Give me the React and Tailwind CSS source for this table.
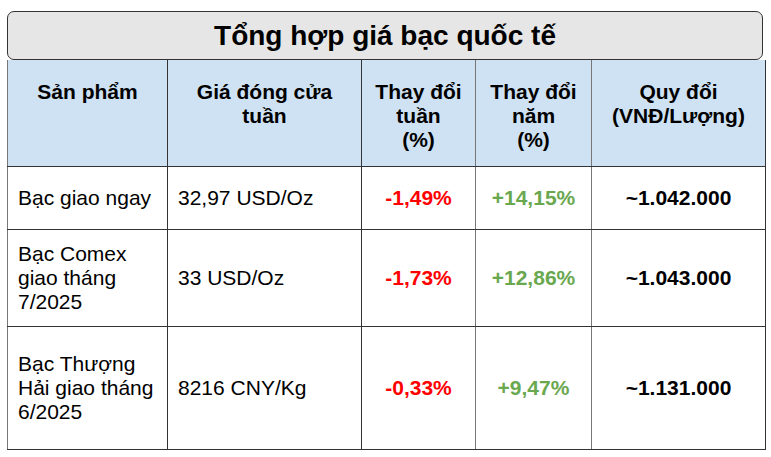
const rows = [
  {
    name: 'Bạc giao ngay',
    price: '32,97 USD/Oz',
    week: '-1,49%',
    year: '+14,15%',
    vnd: '~1.042.000',
    h: 'h-[63px]',
  },
  {
    name: 'Bạc Comex giao tháng 7/2025',
    price: '33 USD/Oz',
    week: '-1,73%',
    year: '+12,86%',
    vnd: '~1.043.000',
    h: 'h-[97px]',
  },
  {
    name: 'Bạc Thượng Hải giao tháng 6/2025',
    price: '8216 CNY/Kg',
    week: '-0,33%',
    year: '+9,47%',
    vnd: '~1.131.000',
    h: 'h-[123px]',
  },
];

const App = () => {
  return (
    <div className="w-[771px] h-[457px] bg-white pt-[11px] pl-[7px] font-['Liberation_Sans',Arial,sans-serif] text-black">
      <div className="w-[756px] h-[49px] rounded-[7px] border border-[#333] bg-[#e7e6e6] flex items-center justify-center">
        <h1 className="text-[28px] font-bold leading-none">Tổng hợp giá bạc quốc tế</h1>
      </div>

      <table className="w-[758px] border-collapse table-fixed text-[21px] leading-[24px]">
        <colgroup>
          <col className="w-[160px]" />
          <col className="w-[194px]" />
          <col className="w-[114px]" />
          <col className="w-[116px]" />
          <col className="w-[174px]" />
        </colgroup>
        <thead>
          <tr className="h-[106px] bg-[#cfe2f3] font-bold">
            <th className="border border-[#333] border-l-[#777] border-t-0 align-top text-center pt-[20px] px-2">Sản phẩm</th>
            <th className="border border-[#333] border-t-0 align-top text-center pt-[20px] px-2">
              Giá đóng cửa
              <br />
              tuần
            </th>
            <th className="border border-[#333] border-r-[#777] border-t-0 align-top text-center pt-[20px] px-1">
              Thay đổi
              <br />
              tuần
              <br />
              (%)
            </th>
            <th className="border border-[#777] border-b-[#333] border-t-0 align-top text-center pt-[20px] px-1">
              Thay đổi
              <br />
              năm
              <br />
              (%)
            </th>
            <th className="border border-[#333] border-l-[#777] border-t-0 align-top text-center pt-[20px] px-1">
              Quy đổi
              <br />
              (VNĐ/Lượng)
            </th>
          </tr>
        </thead>
        <tbody>
          {rows.map((r) => (
            <tr key={r.name} className={r.h}>
              <td className="border border-[#333] border-l-[#777] align-middle text-left pl-[10px] pr-1">{r.name}</td>
              <td className="border border-[#333] align-middle text-left pl-[10px]">{r.price}</td>
              <td className="border border-[#333] border-r-[#777] align-middle text-center font-bold text-[#ff0000]">{r.week}</td>
              <td className="border border-[#777] border-b-[#333] align-middle text-center font-bold text-[#6aa84f]">{r.year}</td>
              <td className="border border-[#333] border-l-[#777] align-middle text-center font-bold">{r.vnd}</td>
            </tr>
          ))}
        </tbody>
      </table>
    </div>
  );
};

export default App;
